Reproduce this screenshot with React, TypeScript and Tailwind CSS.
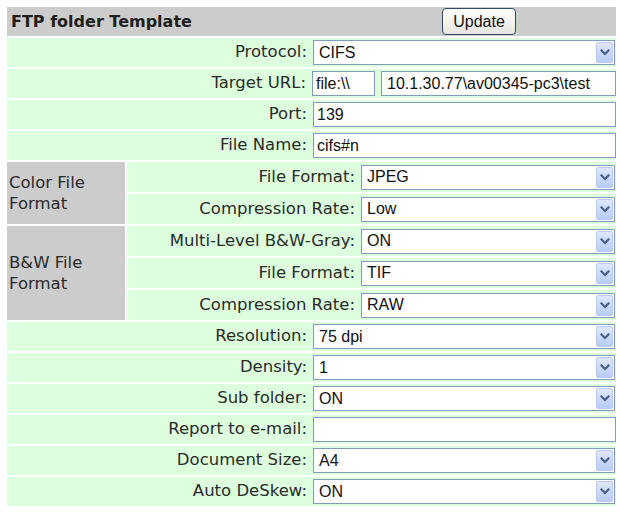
import React from "react";

const font = "font-['DejaVu_Sans',Verdana,sans-serif] text-[16.5px] text-[#2a2a2a]";
const label = `${font} leading-none`;
const field = "font-['Liberation_Sans',Arial,sans-serif] text-[16px] text-[#111]";

function Chevron() {
  return (
    <svg width="10" height="7" viewBox="0 0 10 7" fill="none">
      <path d="M1.5 1.5 L5 5 L8.5 1.5" stroke="#4b5f86" strokeWidth="2.2" strokeLinecap="square" />
    </svg>
  );
}

function Select({ value, width }: { value: string; width: string }) {
  return (
    <div className={`relative h-[25px] ${width} border border-[#7f9db9] bg-white flex items-center pl-[5px] ${field}`}>
      <span>{value}</span>
      <div className="absolute right-[1px] top-[1px] bottom-[1px] w-[17px] rounded-[2px] border border-[#b6c9f2] bg-gradient-to-b from-[#dfe8fd] to-[#b8ccf6] flex items-center justify-center">
        <Chevron />
      </div>
    </div>
  );
}

function TextInput({ value, width, pl = "pl-[3px]" }: { value: string; width: string; pl?: string }) {
  return (
    <div className={`h-[25px] ${width} border border-[#7f9db9] bg-white flex items-center ${pl} ${field}`}>
      <span>{value}</span>
    </div>
  );
}

function PlainRow({ name, children }: { name: string; children: React.ReactNode }) {
  return (
    <div className="flex items-center bg-[#ddffdd] h-[29px]">
      <div className={`w-[306px] pr-[6px] text-right ${label}`}>{name}</div>
      {children}
    </div>
  );
}

function GroupRow({ name, children }: { name: string; children: React.ReactNode }) {
  return (
    <div className="flex items-center bg-[#ddffdd] h-[30px]">
      <div className={`w-[234px] pr-[6px] text-right ${label}`}>{name}</div>
      {children}
    </div>
  );
}

function Group({ title, rows }: { title: [string, string]; rows: [string, string][] }) {
  return (
    <div className="flex gap-[2px]">
      <div className={`w-[118px] bg-[#cccccc] flex flex-col justify-center pl-[2px] ${font} leading-[21px]`}>
        <span>{title[0]}</span>
        <span>{title[1]}</span>
      </div>
      <div className="flex-1 flex flex-col gap-[2px]">
        {rows.map(([n, v]) => (
          <GroupRow key={n + v} name={n}>
            <Select value={v} width="w-[254px]" />
          </GroupRow>
        ))}
      </div>
    </div>
  );
}

export default function App() {
  return (
    <div className="bg-white w-[620px] h-[525px] overflow-hidden pt-[7px] pl-[7px]">
      <div className="w-[609px] flex flex-col gap-[2px]">
        <div className="h-[29px] bg-[#cccccc] flex items-center">
          <div className="w-[435px] pl-[4px] font-['DejaVu_Sans',Verdana,sans-serif] font-bold text-[16px] text-[#1e1e1e]">
            FTP folder Template
          </div>
          <button className={`h-[27px] w-[74px] rounded-[4px] border border-[#2f4a66] bg-gradient-to-b from-white to-[#e6e5df] ${field} leading-none`}>
            Update
          </button>
        </div>

        <PlainRow name="Protocol:">
          <Select value="CIFS" width="w-[302px]" />
        </PlainRow>
        <PlainRow name="Target URL:">
          <div className="flex gap-[6px]">
            <TextInput value="file:\\" width="w-[63px]" />
            <TextInput value="10.1.30.77\av00345-pc3\test" width="w-[235px]" pl="pl-[5px]" />
          </div>
        </PlainRow>
        <PlainRow name="Port:">
          <TextInput value="139" width="w-[303px]" />
        </PlainRow>
        <PlainRow name="File Name:">
          <TextInput value="cifs#n" width="w-[303px]" />
        </PlainRow>

        <Group
          title={["Color File", "Format"]}
          rows={[
            ["File Format:", "JPEG"],
            ["Compression Rate:", "Low"],
          ]}
        />
        <Group
          title={["B&W File", "Format"]}
          rows={[
            ["Multi-Level B&W-Gray:", "ON"],
            ["File Format:", "TIF"],
            ["Compression Rate:", "RAW"],
          ]}
        />

        <PlainRow name="Resolution:">
          <Select value="75 dpi" width="w-[302px]" />
        </PlainRow>
        <PlainRow name="Density:">
          <Select value="1" width="w-[302px]" />
        </PlainRow>
        <PlainRow name="Sub folder:">
          <Select value="ON" width="w-[302px]" />
        </PlainRow>
        <PlainRow name="Report to e-mail:">
          <TextInput value="" width="w-[303px]" />
        </PlainRow>
        <PlainRow name="Document Size:">
          <Select value="A4" width="w-[302px]" />
        </PlainRow>
        <PlainRow name="Auto DeSkew:">
          <Select value="ON" width="w-[302px]" />
        </PlainRow>
      </div>
    </div>
  );
}
